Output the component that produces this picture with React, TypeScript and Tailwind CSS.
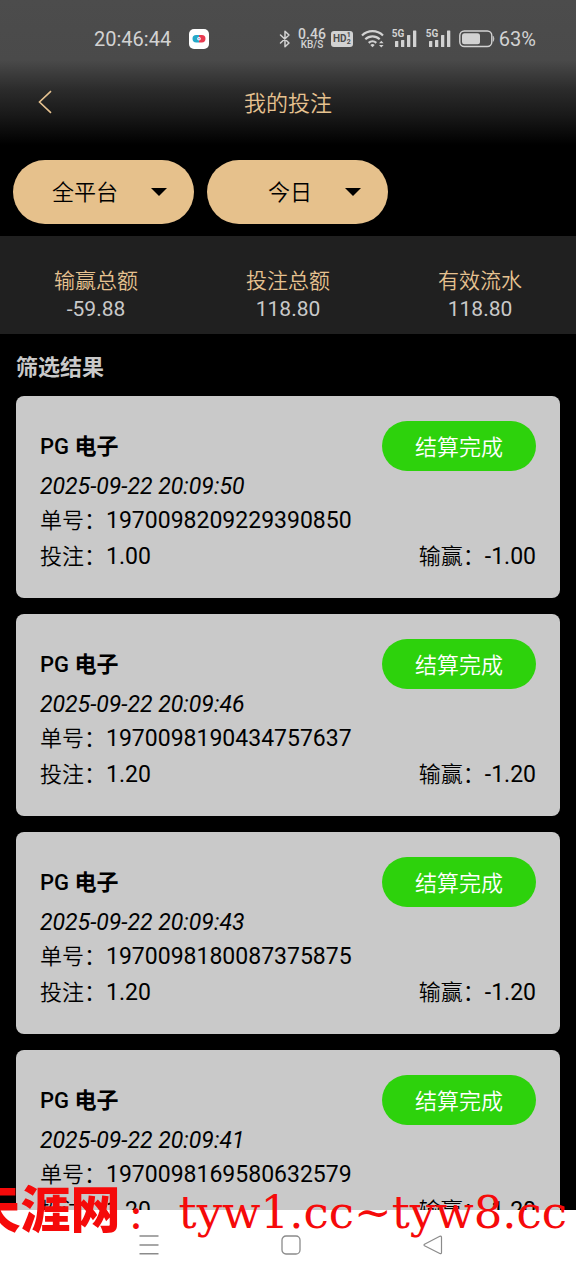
import React from "react";

type Bet = { id: string; time: string; stake: string; result: string };

const bets: Bet[] = [
  { id: "1970098209229390850", time: "2025-09-22 20:09:50", stake: "1.00", result: "-1.00" },
  { id: "1970098190434757637", time: "2025-09-22 20:09:46", stake: "1.20", result: "-1.20" },
  { id: "1970098180087375875", time: "2025-09-22 20:09:43", stake: "1.20", result: "-1.20" },
  { id: "1970098169580632579", time: "2025-09-22 20:09:41", stake: "1.20", result: "-1.20" },
];

const totals = [
  { label: "输赢总额", value: "-59.88" },
  { label: "投注总额", value: "118.80" },
  { label: "有效流水", value: "118.80" },
];

function Signal() {
  return (
    <span className="relative block h-5 w-[25px]">
      <svg viewBox="0 0 25 20" className="h-5 w-[25px]" fill="currentColor" aria-hidden="true">
        <rect x="3" y="12" width="3.300" height="6" rx="0.500" />
        <rect x="9" y="11" width="3.300" height="7" rx="0.500" />
        <rect x="15" y="6" width="3.300" height="12" rx="0.500" />
        <rect x="21" y="1.500" width="3.300" height="16.500" rx="0.500" />
      </svg>
      <span className="absolute left-0 top-0 text-[10px] font-bold leading-[10px]">5G</span>
    </span>
  );
}

function StatusBar() {
  return (
    <div className="flex h-[78px] items-center pl-[94px] pr-10 text-[#d2d2d2]">
      <span className="text-xl leading-6">20:46:44</span>
      <svg viewBox="0 0 20 20" className="ml-[18px] size-5" aria-hidden="true">
        <rect width="20" height="20" rx="5" fill="#fff" />
        <path d="M7.200 6H10v7.400H7.200a3.700 3.700 0 0 1 0-7.400Z" fill="#25a9c9" />
        <path d="M10 6h2.800a3.700 3.700 0 0 1 0 7.400H10Z" fill="#e83a50" />
        <circle cx="10" cy="9.700" r="1.800" fill="#fff" />
        <circle cx="10" cy="9.700" r="0.700" fill="#4a7de0" />
      </svg>
      <div className="ml-auto flex items-center">
        <svg viewBox="0 0 12 18" className="h-[18px] w-3" fill="none" stroke="currentColor" strokeWidth="1.500" strokeLinejoin="round" strokeLinecap="round" aria-hidden="true">
          <path d="M1.500 5 10 13 6 16.800V1.200L10 5 1.500 13" />
        </svg>
        <div className="ml-[7px] flex flex-col items-center font-medium">
          <span className="text-sm leading-[11px]">0.46</span>
          <span className="text-[10px] leading-[9px]">KB/S</span>
        </div>
        <span className="ml-[5px] flex h-4 w-[22px] items-center justify-center rounded-[3px] bg-[#d2d2d2] text-[#4b4b4b]">
          <span className="text-[10px] font-bold leading-4">HD</span>
          <span className="flex flex-col text-[7px] font-bold leading-[7px]">
            <span>1</span>
            <span>2</span>
          </span>
        </span>
        <svg viewBox="0 0 24 20" className="ml-[8px] h-5 w-6" fill="none" stroke="currentColor" strokeWidth="2.200" aria-hidden="true">
          <path d="M1 6.500a15 15 0 0 1 21 0M4.300 10.200a10.500 10.500 0 0 1 14.400 0M7.700 13.800a5.800 5.800 0 0 1 7.600 0" />
          <path d="m11.500 18.300-2.200-2.400a3.300 3.300 0 0 1 4.400 0Z" fill="currentColor" stroke="none" />
          <path d="M18 14.200 20.300 11.800 22.600 14.200ZM18 16 20.300 18.400 22.600 16Z" fill="currentColor" stroke="none" />
        </svg>
        <span className="ml-[7px]">
          <Signal />
        </span>
        <span className="ml-[9px]">
          <Signal />
        </span>
        <svg viewBox="0 0 36 18" className="ml-[8px] h-[18px] w-9" aria-hidden="true">
          <rect x="0.800" y="1" width="32" height="15.500" rx="4.500" fill="none" stroke="currentColor" strokeWidth="1.400" />
          <rect x="3" y="3.300" width="18" height="11" rx="2.500" fill="currentColor" />
          <path d="M34.200 6.200q1.600 2.600 0 5.200Z" fill="currentColor" stroke="currentColor" strokeWidth="0.600" />
        </svg>
        <span className="ml-1 text-xl leading-6">63%</span>
      </div>
    </div>
  );
}

function Filter({ label, options }: { label: string; options: string[] }) {
  return (
    <div className="relative w-[181px]">
      <select
        aria-label={label}
        className="h-16 w-full appearance-none rounded-full bg-[#e6c18c] pr-[76px] text-[22px] font-[350] text-black [text-align-last:right]"
      >
        {options.map((o) => (
          <option key={o}>{o}</option>
        ))}
      </select>
      <svg viewBox="0 0 16 8" className="pointer-events-none absolute right-[27px] top-7 h-2 w-4" aria-hidden="true">
        <path d="M0 0h16L8 8Z" fill="#000" />
      </svg>
    </div>
  );
}

function BetCard({ bet }: { bet: Bet }) {
  return (
    <li className="rounded-lg bg-[#c9c9c9] px-6 pb-[23px] pt-[25px] text-[22px] font-[350] text-black">
      <div className="flex h-[50px] items-center justify-between">
        <h3 className="font-medium">
          PG <span className="font-bold">电子</span>
        </h3>
        <span className="rounded-full bg-[#2dd20c] px-[33px] pt-1 leading-[46px] text-white">结算完成</span>
      </div>
      <time className="block text-[23px] font-normal italic leading-8">{bet.time}</time>
      <p className="leading-9">
        单号：<span className="text-[23px] font-normal">{bet.id}</span>
      </p>
      <div className="flex justify-between leading-9">
        <p>
          投注：<span className="text-[23px] font-normal">{bet.stake}</span>
        </p>
        <p>
          输赢：<span className="text-[23px] font-normal">{bet.result}</span>
        </p>
      </div>
    </li>
  );
}

function BottomNav() {
  const button = "flex h-full items-center justify-center";
  return (
    <nav className="grid h-[70px] shrink-0 grid-cols-3 bg-white pl-[78px] pr-[72px] text-[#8b8b8b]">
      <button type="button" aria-label="菜单" className={button}>
        <svg viewBox="0 0 20 20" className="size-5" stroke="currentColor" strokeWidth="1.500">
          <path d="M0.500 1h19M0.500 10h19M0.500 18.700h19" />
        </svg>
      </button>
      <button type="button" aria-label="主页" className={button}>
        <svg viewBox="0 0 20 20" className="size-5" fill="none" stroke="currentColor" strokeWidth="1.300">
          <rect x="1" y="1" width="18" height="18" rx="4" />
        </svg>
      </button>
      <button type="button" aria-label="后退" className={button}>
        <svg viewBox="0 0 20 20" className="size-5" fill="none" stroke="currentColor" strokeWidth="1.200" strokeLinejoin="round">
          <path d="M1.500 9.200 16.800 1.300Q18.500 0.800 18.500 2.500V17.500Q18.500 19.200 16.800 18.500L1.500 10.800Q0.600 10 1.500 9.200Z" />
        </svg>
      </button>
    </nav>
  );
}

export default function App() {
  return (
    <div className="relative flex h-screen flex-col overflow-hidden bg-black font-['Roboto','Noto_Sans_CJK_SC',sans-serif]">
      <header className="shrink-0 bg-[linear-gradient(to_bottom,#4c4c4c_0,#4a4a4a_60px,#2b2b2b_90px,#191919_115px,#000_145px)] pb-[34px]">
        <StatusBar />
        <div className="grid h-12 grid-cols-[1fr_auto_1fr] items-center text-[#e6c290]">
          <button type="button" aria-label="返回" className="ml-[37px] w-4">
            <svg viewBox="0 0 16 24" className="h-6 w-4" fill="none" stroke="currentColor" strokeWidth="1.600">
              <path d="M14 1.200 2.500 12 14 22.800" />
            </svg>
          </button>
          <h1 className="pt-[3px] text-[22px] font-[350] leading-8">我的投注</h1>
        </div>
      </header>

      <div className="flex shrink-0 gap-[13px] px-[13px] pb-3">
        <Filter label="平台" options={["全平台"]} />
        <Filter label="日期" options={["今日"]} />
      </div>

      <dl className="grid h-[98px] shrink-0 grid-cols-3 bg-[#202020] pt-[31px] text-center text-[21px] leading-7">
        {totals.map((t) => (
          <div key={t.label}>
            <dt className="font-[350] text-[#e6c290]">{t.label}</dt>
            <dd className="text-[#c9c9c9]">{t.value}</dd>
          </div>
        ))}
      </dl>

      <main className="min-h-0 flex-1 overflow-y-auto px-4 [scrollbar-width:none]">
        <h2 className="pb-[13px] pt-[19px] text-[22px] font-bold leading-[30px] text-[#c9c9c9]">筛选结果</h2>
        <ul className="flex flex-col gap-4">
          {bets.map((b) => (
            <BetCard key={b.id} bet={b} />
          ))}
        </ul>
      </main>

      <BottomNav />

      <p className="pointer-events-none absolute bottom-8 right-[9px] flex items-baseline whitespace-nowrap leading-[60px] text-[#f50a0a]">
        <span className="text-[50px] font-black">天涯网</span>
        <span className="pl-2 pr-5 text-[30px] font-bold">：</span>
        <span className="font-['DejaVu_Serif',serif] text-[45px]">tyw1.cc~tyw8.cc</span>
      </p>
    </div>
  );
}
